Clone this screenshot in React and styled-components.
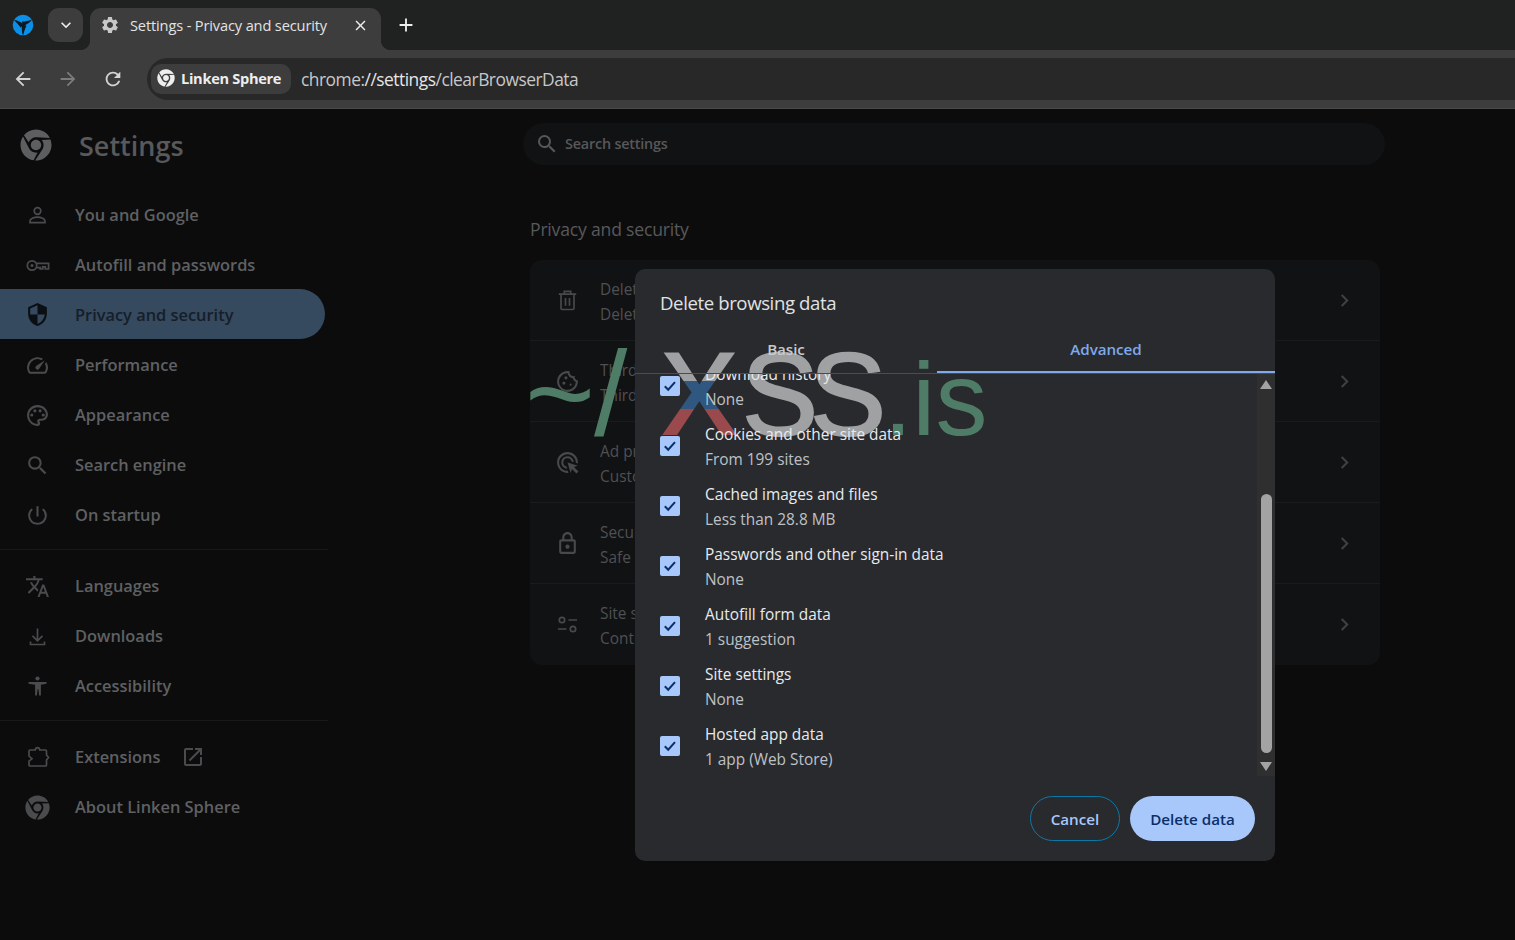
import React from "react";
import styled, { createGlobalStyle } from "styled-components";
import {
  MdOutlineSecurity, MdOutlineSpeed, MdOutlinePalette, MdSearch,
  MdPowerSettingsNew, MdTranslate,
  MdOutlineOpenInNew, MdOutlineCookie, MdOutlineAdsClick, MdOutlineLock,
  MdSettings, MdClose, MdAdd, MdArrowBack, MdArrowForward, MdRefresh, MdChevronRight, MdKeyboardArrowDown,
} from "react-icons/md";
import { FaChrome } from "react-icons/fa";

const UI = `"Open Sans", "Noto Sans", "Liberation Sans", sans-serif`;

const Global = createGlobalStyle`
  html, body { margin: 0; padding: 0; background: #0c0c0d; overflow: hidden; }
  body { font-family: ${UI}; }
  * { box-sizing: border-box; }
`;

const Shell = styled.div`
  position: relative;
  width: 1515px;
  height: 940px;
  overflow: hidden;
  display: flex;
  flex-direction: column;
`;

/* ---------- browser chrome ---------- */
const TabStrip = styled.div`
  height: 50px;
  background: #202222;
  display: flex;
  align-items: flex-end;
  padding-left: 12px;
  flex: none;
`;
const LensSlot = styled.div`
  width: 36px;
  height: 42px;
  display: flex;
  align-items: center;
  padding-bottom: 8px;
`;
const TabListButton = styled.div`
  width: 35px;
  height: 34px;
  margin-bottom: 8px;
  border-radius: 11px;
  background: #3d3d3d;
  color: #ececec;
  display: flex;
  align-items: center;
  justify-content: center;
  font-size: 20px;
`;
const Tab = styled.div`
  width: 291px;
  height: 42px;
  margin-left: 7px;
  border-radius: 11px 11px 0 0;
  background: #3d3d3d;
  color: #e3e3e3;
  display: flex;
  align-items: center;
  padding: 0 4px 8px 10px;
  font-size: 14.6px;
  letter-spacing: -0.14px;
  position: relative;
  &::before, &::after {
    content: "";
    position: absolute;
    bottom: 0;
    width: 10px;
    height: 10px;
  }
  &::before { left: -10px; background: radial-gradient(circle at 0 0, transparent 10px, #3d3d3d 10.5px); }
  &::after { right: -10px; background: radial-gradient(circle at 100% 0, transparent 10px, #3d3d3d 10.5px); }
`;
const TabGear = styled.span`
  display: flex;
  font-size: 20px;
  color: #c8c8c8;
  margin-right: 10px;
`;
const TabTitle = styled.span`
  flex: 1;
  white-space: nowrap;
  padding-bottom: 1px;
`;
const TabClose = styled.span`
  display: flex;
  font-size: 17px;
  color: #eeeeee;
  margin-right: 8px;
`;
const NewTab = styled.div`
  margin-left: 14px;
  margin-bottom: 14px;
  color: #eeeeee;
  font-size: 22px;
  display: flex;
`;
const Toolbar = styled.div`
  height: 59px;
  background: #3d3d3d;
  border-bottom: 1px solid #4a4a4a;
  display: flex;
  align-items: center;
  flex: none;
  padding-left: 12px;
`;
const NavButton = styled.div`
  width: 45px;
  display: flex;
  font-size: 22px;
  color: ${(p) => (p.$off ? "#7c7c7c" : "#d4d4d4")};
`;
const Omnibox = styled.div`
  flex: 1;
  height: 42px;
  margin-bottom: 1px;
  border-radius: 21px 0 0 21px;
  background: #282828;
  display: flex;
  align-items: center;
  padding-left: 4px;
`;
const Chip = styled.div`
  width: 140px;
  height: 30px;
  border-radius: 10px;
  background: #3d3d3d;
  color: #eeeeee;
  font-weight: 700;
  font-size: 14.6px;
  letter-spacing: -0.3px;
  display: flex;
  align-items: center;
  gap: 6px;
  padding: 0 0 1px 6px;
  white-space: nowrap;
`;
const ChipLogo = styled.span`
  display: flex;
  font-size: 18px;
  color: #eeeeee;
`;
const Url = styled.div`
  margin-left: 10px;
  font-size: 17.4px;
  letter-spacing: -0.5px;
  color: #c7c7c7;
  white-space: nowrap;
  & b { font-weight: 400; color: #e6e6e6; }
`;

/* ---------- settings page ---------- */
const Page = styled.div`
  flex: 1;
  background: #0c0c0d;
  display: grid;
  grid-template-columns: 328px 1fr;
  grid-template-rows: 81px 1fr;
`;
const Brand = styled.div`
  display: flex;
  align-items: center;
  padding: 0 0 9px 20px;
  color: #58595b;
  font-size: 27px;
  font-weight: 600;
  gap: 27px;
  & svg { font-size: 32px; color: #5d5e60; }
`;
const SearchRow = styled.div`
  padding: 14px 0 0 195px;
`;
const SearchBox = styled.div`
  width: 862px;
  height: 42px;
  border-radius: 21px;
  background: #111213;
  display: flex;
  align-items: center;
  gap: 6px;
  padding-left: 12px;
  color: #57585a;
  & svg { font-size: 24px; }
`;
const SearchLabel = styled.span`
  font-size: 14.4px;
  font-weight: 600;
  letter-spacing: -0.2px;
  padding-bottom: 2px;
`;
const Sidebar = styled.nav`
  display: flex;
  flex-direction: column;
`;
const NavItem = styled.div`
  width: 325px;
  height: 50px;
  margin-top: ${(p) => (p.$active ? -1 : 0)}px;
  margin-bottom: ${(p) => (p.$active ? 1 : 0)}px;
  border-radius: 0 25px 25px 0;
  background: ${(p) => (p.$active ? "#35495f" : "transparent")};
  color: ${(p) => (p.$active ? "#161e28" : "#5f6062")};
  display: flex;
  align-items: center;
  font-size: 16.4px;
  font-weight: 600;
  white-space: nowrap;
`;
const NavLabel = styled.span`
  padding-bottom: ${(p) => (p.$active ? 0 : 2)}px;
`;
const NavIcon = styled.span`
  width: 75px;
  flex: none;
  padding-left: 25px;
  display: flex;
  font-size: 25px;
  color: ${(p) => (p.$active ? "#0b0f14" : "#4a4b4d")};
`;
const ExternalIcon = styled.span`
  display: flex;
  margin-left: 21px;
  font-size: 24px;
  color: #4a4b4d;
`;
const NavDivider = styled.div`
  height: 1px;
  width: 328px;
  background: #18191a;
  margin: 9px 0 11px;
`;
const Main = styled.main`
  padding: 27px 0 0 202px;
`;
const SectionTitle = styled.div`
  color: #58595b;
  font-size: 17.6px;
  height: 43px;
  letter-spacing: -0.2px;
`;
const Card = styled.div`
  width: 850px;
  border-radius: 12px;
  background: #111214;
`;
const CardRow = styled.div`
  height: ${(p) => p.$h}px;
  display: flex;
  align-items: center;
  padding-left: 25px;
  padding-right: 23px;
  & + & { border-top: 1px solid #1a1b1d; }
`;
const CardIcon = styled.span`
  width: 45px;
  display: flex;
  font-size: 25px;
  color: #48494b;
  flex: none;
`;
const CardText = styled.div`
  flex: 1;
  font-size: 15.4px;
  line-height: 25px;
  padding-top: 3px;
  color: #4f5052;
  white-space: nowrap;
  overflow: hidden;
`;
const CardChevron = styled.span`
  display: flex;
  font-size: 25px;
  color: #3f4042;
`;

/* ---------- dialog & watermark overlay ---------- */
const Dialog = styled.div`
  position: absolute;
  left: 635px;
  top: 269px;
  width: 640px;
  height: 592px;
  border-radius: 10px;
  background: #292a2d;
  display: flex;
  flex-direction: column;
`;
const DialogLayer = styled.div`
  position: relative;
  z-index: 2;
  display: flex;
  flex-direction: column;
  flex: 1;
  min-height: 0;
`;
const DialogTitle = styled.div`
  height: 60px;
  padding: 19px 0 0 25px;
  font-size: 18.6px;
  letter-spacing: -0.4px;
  color: #e0e2e5;
  line-height: 30px;
  flex: none;
`;
const Tabs = styled.div`
  display: grid;
  grid-template-columns: 302px 338px;
  height: 45px;
  border-bottom: 1px solid #4b4c4f;
  flex: none;
`;
const DialogTab = styled.div`
  display: flex;
  align-items: center;
  justify-content: center;
  height: 44px;
  padding-bottom: ${(p) => (p.$on ? 3 : 5)}px;
  font-size: 15.2px;
  font-weight: 600;
  letter-spacing: -0.05px;
  color: ${(p) => (p.$on ? "#7ea9ea" : "#c9cacc")};
  border-bottom: ${(p) => (p.$on ? "2px solid #7ea9ea" : "none")};
`;
const ScrollArea = styled.div`
  flex: 1;
  min-height: 0;
  display: flex;
`;
const RowsClip = styled.div`
  flex: 1;
  overflow: hidden;
`;
const Rows = styled.div`
  margin-top: -20px;
`;
const DataRow = styled.div`
  height: 60px;
  display: flex;
  align-items: center;
  padding-left: 25px;
  gap: 25px;
`;
const Checkbox = styled.span`
  width: 20px;
  height: 20px;
  margin-top: 4px;
  border-radius: 2px;
  background: #a8c7fa;
  color: #0a2f6b;
  display: flex;
  flex: none;
`;
const DataText = styled.div`
  display: flex;
  flex-direction: column;
  margin-top: 5px;
`;
const DataTitle = styled.div`
  height: 25px;
  line-height: 25px;
  font-size: 15.4px;
  color: #e8eaed;
  white-space: nowrap;
`;
const DataSub = styled.div`
  height: 25px;
  line-height: 25px;
  font-size: 15.4px;
  color: #bdc1c6;
  white-space: nowrap;
`;
const Scrollbar = styled.div`
  width: 18px;
  background: #2f2f2f;
  display: flex;
  flex-direction: column;
  align-items: center;
`;
const ArrowUp = styled.span`
  margin-top: 6px;
  width: 0;
  height: 0;
  border-left: 6px solid transparent;
  border-right: 6px solid transparent;
  border-bottom: 9px solid #a3a3a3;
`;
const Thumb = styled.div`
  width: 11px;
  height: 259px;
  margin-top: 105px;
  border-radius: 6px;
  background: #a3a3a3;
`;
const ArrowDown = styled.span`
  margin-top: 9px;
  width: 0;
  height: 0;
  border-left: 6px solid transparent;
  border-right: 6px solid transparent;
  border-top: 9px solid #a3a3a3;
`;
const Footer = styled.div`
  height: 85px;
  display: flex;
  justify-content: flex-end;
  gap: 10px;
  padding: 20px 20px 0 0;
  flex: none;
`;
const Button = styled.div`
  height: 45px;
  width: ${(p) => p.$w}px;
  border-radius: 23px;
  display: flex;
  align-items: center;
  justify-content: center;
  font-size: 15.2px;
  font-weight: 600;
  color: ${(p) => (p.$primary ? "#0a2f6b" : "#a8c7fa")};
  background: ${(p) => (p.$primary ? "#a8c7fa" : "transparent")};
  border: ${(p) => (p.$primary ? "none" : "1px solid #0b79a8")};
`;
const Watermark = styled.div`
  position: absolute;
  left: 525px;
  top: 306px;
  z-index: 1;
  display: flex;
  align-items: baseline;
  font-family: "Liberation Sans", Arial, sans-serif;
  line-height: 130px;
  white-space: nowrap;
  pointer-events: none;
`;
const WmPrompt = styled.span`
  font-size: 120px;
  color: #4e7c66;
  letter-spacing: -1px;
`;
const WmX = styled.span`
  margin-left: 34px;
  font-size: 156px;
  background: linear-gradient(#a0a1a3 0 75px, #30577f 75px 103px, #9a4a4d 103px);
  background-clip: text;
  -webkit-background-clip: text;
  color: transparent;
  line-height: 150px;
`;
const WmSS = styled.span`
  margin-left: 3px;
  font-size: 156px;
  letter-spacing: -10px;
  color: #a0a1a3;
`;
const WmIs = styled.span`
  margin-left: 6px;
  font-size: 104px;
  color: #4e7c66;
`;

/* ---------- drawn icons ---------- */
const Icon = ({ children, filled }) => (
  <svg width="1em" height="1em" viewBox="0 0 25 25" fill={filled ? "currentColor" : "none"} stroke={filled ? "none" : "currentColor"} strokeWidth="1.7">
    {children}
  </svg>
);
const PersonIcon = () => (
  <Icon>
    <circle cx="12.5" cy="8" r="3.3" />
    <path d="M5 19.7v-1.6c0-2.2 4-3.9 7.5-3.9s7.5 1.7 7.5 3.9v1.6z" />
  </Icon>
);
const KeyIcon = () => (
  <Icon>
    <circle cx="7" cy="12.5" r="4.7" />
    <circle cx="7" cy="12.5" r="1.5" fill="currentColor" stroke="none" />
    <path d="M11.5 10.3H23.6V16H20.3V13.8H17.7V16H15.2V14.7H11.5" />
  </Icon>
);
const DownloadIcon = () => (
  <Icon>
    <path d="M12.5 4.5v12M7.5 11.8l5 5 5-5M5.5 17.5v3h14v-3" />
  </Icon>
);
const AccessIcon = () => (
  <Icon filled>
    <circle cx="12.5" cy="4.5" r="2.1" />
    <path d="M3.5 8h18v1.7l-5.6 1V21.5h-1.8l-.7-6.2h-.8l-.7 6.2H10.1V10.7l-6.6-1z" />
  </Icon>
);
const ExtensionIcon = () => (
  <Icon>
    <path d="M5 5H10.2C10.5 3.4 11.3 2.7 12.5 2.7S14.5 3.4 14.8 5H20.5A1 1 0 0 1 21.5 6V10L23.5 12.5L21.5 15V20A1 1 0 0 1 20.5 21H5A1 1 0 0 1 4 20V16.2L7 13.8L4 11V6A1 1 0 0 1 5 5Z" />
  </Icon>
);
const TrashIcon = () => (
  <Icon>
    <path d="M3.8 6.2H21.2M9.3 6V3.4h6.4V6M6 6.5V20.3a1.2 1.2 0 0 0 1.2 1.2H17.8a1.2 1.2 0 0 0 1.2-1.2V6.5M10.5 10v7.8M14.5 10v7.8" />
  </Icon>
);
const SlidersIcon = () => (
  <Icon>
    <circle cx="7" cy="8" r="2.7" />
    <path d="M13.5 8H22M3 17H11.5" />
    <circle cx="18" cy="17" r="2.7" />
  </Icon>
);
const CheckMark = () => (
  <svg width="20" height="20" viewBox="0 0 20 20" fill="none" stroke="currentColor" strokeWidth="2">
    <path d="M4.8 10.3l3.4 3.4 6.8-7.6" />
  </svg>
);
const Blade = "M12.8 9.8C9.5 9.6 6 5.8 2 6C4.5 8.5 7 11 8.6 13.6Z";
const LensLogo = () => (
  <svg width="22" height="22" viewBox="0 0 22 22">
    <circle cx="11" cy="11" r="10.3" fill="#0a90e8" />
    <path d={Blade} fill="#0b1a25" />
    <path d={Blade} fill="#0b1a25" transform="rotate(120 11 11)" />
    <path d={Blade} fill="#0b1a25" transform="rotate(240 11 11)" />
  </svg>
);

const navTop = [
  [<PersonIcon />, "You and Google"],
  [<KeyIcon />, "Autofill and passwords"],
  [<MdOutlineSecurity />, "Privacy and security", true],
  [<MdOutlineSpeed />, "Performance"],
  [<MdOutlinePalette />, "Appearance"],
  [<MdSearch />, "Search engine"],
  [<MdPowerSettingsNew />, "On startup"],
];
const navMid = [
  [<MdTranslate />, "Languages"],
  [<DownloadIcon />, "Downloads"],
  [<AccessIcon />, "Accessibility"],
];
const cards = [
  [<TrashIcon />, "Delete browsing data", "Delete history, cookies, cache, and more", 80],
  [<MdOutlineCookie />, "Third-party cookies", "Third-party cookies are blocked in Incognito mode", 81],
  [<MdOutlineAdsClick />, "Ad privacy", "Customize the info used by sites to show you ads", 81],
  [<MdOutlineLock />, "Security", "Safe Browsing and other security settings", 81],
  [<SlidersIcon />, "Site settings", "Controls what information sites can use and show", 82],
];
const dataRows = [
  ["Download history", "None"],
  ["Cookies and other site data", "From 199 sites"],
  ["Cached images and files", "Less than 28.8 MB"],
  ["Passwords and other sign-in data", "None"],
  ["Autofill form data", "1 suggestion"],
  ["Site settings", "None"],
  ["Hosted app data", "1 app (Web Store)"],
];

const Item = ({ icon, label, active, children }) => (
  <NavItem $active={active}>
    <NavIcon $active={active}>{icon}</NavIcon>
    <NavLabel $active={active}>{label}</NavLabel>
    {children}
  </NavItem>
);

export default function App() {
  return (
    <Shell>
      <Global />
      <TabStrip>
        <LensSlot><LensLogo /></LensSlot>
        <TabListButton><MdKeyboardArrowDown /></TabListButton>
        <Tab>
          <TabGear><MdSettings /></TabGear>
          <TabTitle>Settings - Privacy and security</TabTitle>
          <TabClose><MdClose /></TabClose>
        </Tab>
        <NewTab><MdAdd /></NewTab>
      </TabStrip>
      <Toolbar>
        <NavButton><MdArrowBack /></NavButton>
        <NavButton $off><MdArrowForward /></NavButton>
        <NavButton><MdRefresh /></NavButton>
        <Omnibox>
          <Chip><ChipLogo><FaChrome /></ChipLogo>Linken Sphere</Chip>
          <Url>chrome:<b>//settings</b>/clearBrowserData</Url>
        </Omnibox>
      </Toolbar>
      <Page>
        <Brand><FaChrome />Settings</Brand>
        <SearchRow>
          <SearchBox><MdSearch /><SearchLabel>Search settings</SearchLabel></SearchBox>
        </SearchRow>
        <Sidebar>
          {navTop.map(([icon, label, active]) => (
            <Item key={label} icon={icon} label={label} active={active} />
          ))}
          <NavDivider />
          {navMid.map(([icon, label]) => (
            <Item key={label} icon={icon} label={label} />
          ))}
          <NavDivider />
          <Item icon={<ExtensionIcon />} label="Extensions">
            <ExternalIcon><MdOutlineOpenInNew /></ExternalIcon>
          </Item>
          <Item icon={<FaChrome />} label="About Linken Sphere" />
        </Sidebar>
        <Main>
          <SectionTitle>Privacy and security</SectionTitle>
          <Card>
            {cards.map(([icon, title, sub, h]) => (
              <CardRow key={title} $h={h}>
                <CardIcon>{icon}</CardIcon>
                <CardText>{title}<br />{sub}</CardText>
                <CardChevron><MdChevronRight /></CardChevron>
              </CardRow>
            ))}
          </Card>
        </Main>
      </Page>
      <Dialog>
        <DialogLayer>
          <DialogTitle>Delete browsing data</DialogTitle>
          <Tabs>
            <DialogTab>Basic</DialogTab>
            <DialogTab $on>Advanced</DialogTab>
          </Tabs>
          <ScrollArea>
            <RowsClip>
              <Rows>
                {dataRows.map(([t, s]) => (
                  <DataRow key={t}>
                    <Checkbox><CheckMark /></Checkbox>
                    <DataText>
                      <DataTitle>{t}</DataTitle>
                      <DataSub>{s}</DataSub>
                    </DataText>
                  </DataRow>
                ))}
              </Rows>
            </RowsClip>
            <Scrollbar>
              <ArrowUp />
              <Thumb />
              <ArrowDown />
            </Scrollbar>
          </ScrollArea>
          <Footer>
            <Button $w={90}>Cancel</Button>
            <Button $w={125} $primary>Delete data</Button>
          </Footer>
        </DialogLayer>
      </Dialog>
      <Watermark>
        <WmPrompt>~/</WmPrompt>
        <WmX>x</WmX>
        <WmSS>ss</WmSS>
        <WmIs>.is</WmIs>
      </Watermark>
    </Shell>
  );
}
